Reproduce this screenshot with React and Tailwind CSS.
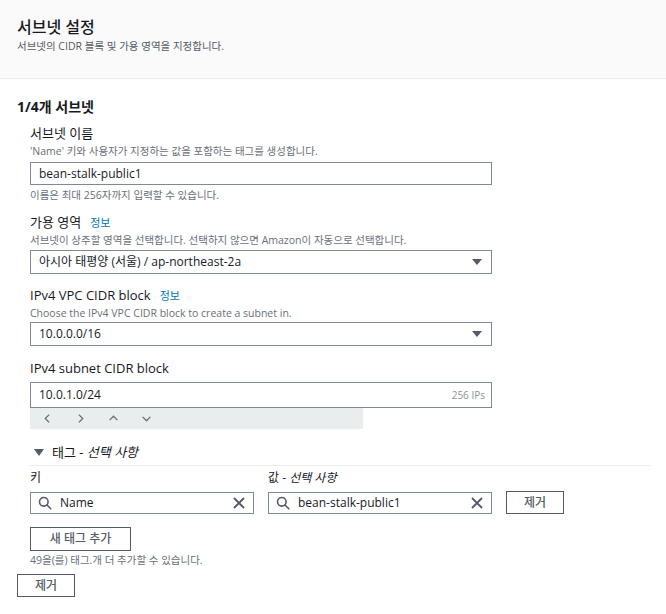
import React from "react";

const font = { fontFamily: '"Open Sans", "Noto Sans CJK KR", sans-serif' };

function Caret() {
  return (
    <svg width="12" height="8" viewBox="0 0 12 8" className="shrink-0">
      <path d="M1 1 L11 1 L6 7 Z" fill="#545b64" />
    </svg>
  );
}

function SearchIcon() {
  return (
    <svg width="14" height="14" viewBox="0 0 14 14" fill="none" stroke="#545b64" strokeWidth="1.6" className="shrink-0">
      <circle cx="5.8" cy="5.8" r="4.3" />
      <path d="M9 9 L12.8 12.8" strokeLinecap="round" />
    </svg>
  );
}

function XIcon() {
  return (
    <svg width="14" height="14" viewBox="0 0 14 14" fill="none" stroke="#545b64" strokeWidth="1.8" className="shrink-0">
      <path d="M2 2 L12 12 M12 2 L2 12" />
    </svg>
  );
}

function Chev({ d }) {
  return (
    <svg width="11" height="11" viewBox="0 0 10 10" fill="none" stroke="#687078" strokeWidth="1.2">
      <path d={d} />
    </svg>
  );
}

export default function App() {
  return (
    <div className="w-[666px] h-[614px] bg-white text-[#16191f] overflow-hidden" style={font}>
      <div className="h-[79px] bg-[#fafafa] border-b border-[#eaeded] px-[17px] pt-[16px]">
        <div className="text-[16px] leading-[22px] font-medium">서브넷 설정</div>
        <div className="text-[10.5px] leading-[16px] text-[#545b64]">서브넷의 CIDR 블록 및 가용 영역을 지정합니다.</div>
      </div>

      <div className="px-[17px]">
        <div className="mt-[18px] text-[14px] leading-[20px] font-bold">1/4개 서브넷</div>

        <div className="pl-[13px]">
          <div className="mt-[7px] text-[13px] leading-[19px]">서브넷 이름</div>
          <div className="text-[10.5px] leading-[16px] text-[#687078]">'Name' 키와 사용자가 지정하는 값을 포함하는 태그를 생성합니다.</div>
          <div className="mt-[3px] w-[462px] h-[23px] border border-[#7d8998] flex items-center px-[8px] text-[12px]">bean-stalk-public1</div>
          <div className="mt-[2px] text-[10.5px] leading-[16px] text-[#687078]">이름은 최대 256자까지 입력할 수 있습니다.</div>

          <div className="mt-[10px] text-[13px] leading-[19px] flex items-center gap-[9px]">
            <span>가용 영역</span>
            <span className="text-[11px] text-[#0073bb]">정보</span>
          </div>
          <div className="text-[10.5px] leading-[16px] text-[#687078]">서브넷이 상주할 영역을 선택합니다. 선택하지 않으면 Amazon이 자동으로 선택합니다.</div>
          <div className="mt-[2px] w-[462px] h-[24px] border border-[#7d8998] flex items-center justify-between pl-[8px] pr-[8px] text-[12px]">
            <span>아시아 태평양 (서울) / ap-northeast-2a</span>
            <Caret />
          </div>

          <div className="mt-[12px] text-[13px] leading-[19px] flex items-center gap-[9px]">
            <span>IPv4 VPC CIDR block</span>
            <span className="text-[11px] text-[#0073bb]">정보</span>
          </div>
          <div className="text-[10.5px] leading-[16px] text-[#687078]">Choose the IPv4 VPC CIDR block to create a subnet in.</div>
          <div className="mt-[1px] w-[462px] h-[24px] border border-[#7d8998] flex items-center justify-between pl-[8px] pr-[8px] text-[12px]">
            <span>10.0.0.0/16</span>
            <Caret />
          </div>

          <div className="mt-[13px] text-[13px] leading-[19px]">IPv4 subnet CIDR block</div>
          <div className="mt-[4px] w-[462px] h-[26px] border border-[#7d8998] flex items-center justify-between pl-[8px] pr-[6px] text-[12px]">
            <span>10.0.1.0/24</span>
            <span className="text-[10px] text-[#879596]">256 IPs</span>
          </div>
          <div className="w-[333px] h-[21px] bg-[#eaeded] flex items-center pl-[12px] gap-[22px]">
            <Chev d="M6.5 1.5 L3 5 L6.5 8.5" />
            <Chev d="M3.5 1.5 L7 5 L3.5 8.5" />
            <Chev d="M1.5 6.5 L5 3 L8.5 6.5" />
            <Chev d="M1.5 3.5 L5 7 L8.5 3.5" />
          </div>

          <div className="mt-[13px] flex items-center text-[13px] leading-[20px] pl-[4px]">
            <svg width="10" height="7" viewBox="0 0 10 7" className="mr-[8px]"><path d="M0 0 L10 0 L5 7 Z" fill="#545b64" /></svg>
            <span>태그 - <i>선택 사항</i></span>
          </div>
          <div className="mt-[3px] w-[620px] border-t border-[#eaeded]"></div>

          <div className="flex mt-[2px]">
            <div className="w-[238px] text-[12px] leading-[19px]">키</div>
            <div className="text-[12px] leading-[19px]">값 - <i>선택 사항</i></div>
          </div>
          <div className="flex items-center mt-[4px]">
            <div className="w-[224px] h-[22px] border border-[#7d8998] flex items-center px-[7px] gap-[8px] text-[12px]">
              <SearchIcon />
              <span className="flex-1">Name</span>
              <XIcon />
            </div>
            <div className="ml-[14px] w-[224px] h-[22px] border border-[#7d8998] flex items-center px-[7px] gap-[8px] text-[12px]">
              <SearchIcon />
              <span className="flex-1">bean-stalk-public1</span>
              <XIcon />
            </div>
            <div className="ml-[14px] w-[58px] h-[23px] border border-[#545b64] flex items-center justify-center text-[12px] font-medium text-[#545b64]">제거</div>
          </div>

          <div className="mt-[13px] w-[101px] h-[24px] border border-[#545b64] flex items-center justify-center text-[12px] font-medium text-[#545b64]">새 태그 추가</div>
          <div className="mt-[1px] text-[10.5px] leading-[16px] text-[#687078]">49을(를) 태그.개 더 추가할 수 있습니다.</div>
        </div>

        <div className="mt-[6px] w-[58px] h-[23px] border border-[#545b64] flex items-center justify-center text-[12px] font-medium text-[#545b64]">제거</div>
      </div>
    </div>
  );
}
